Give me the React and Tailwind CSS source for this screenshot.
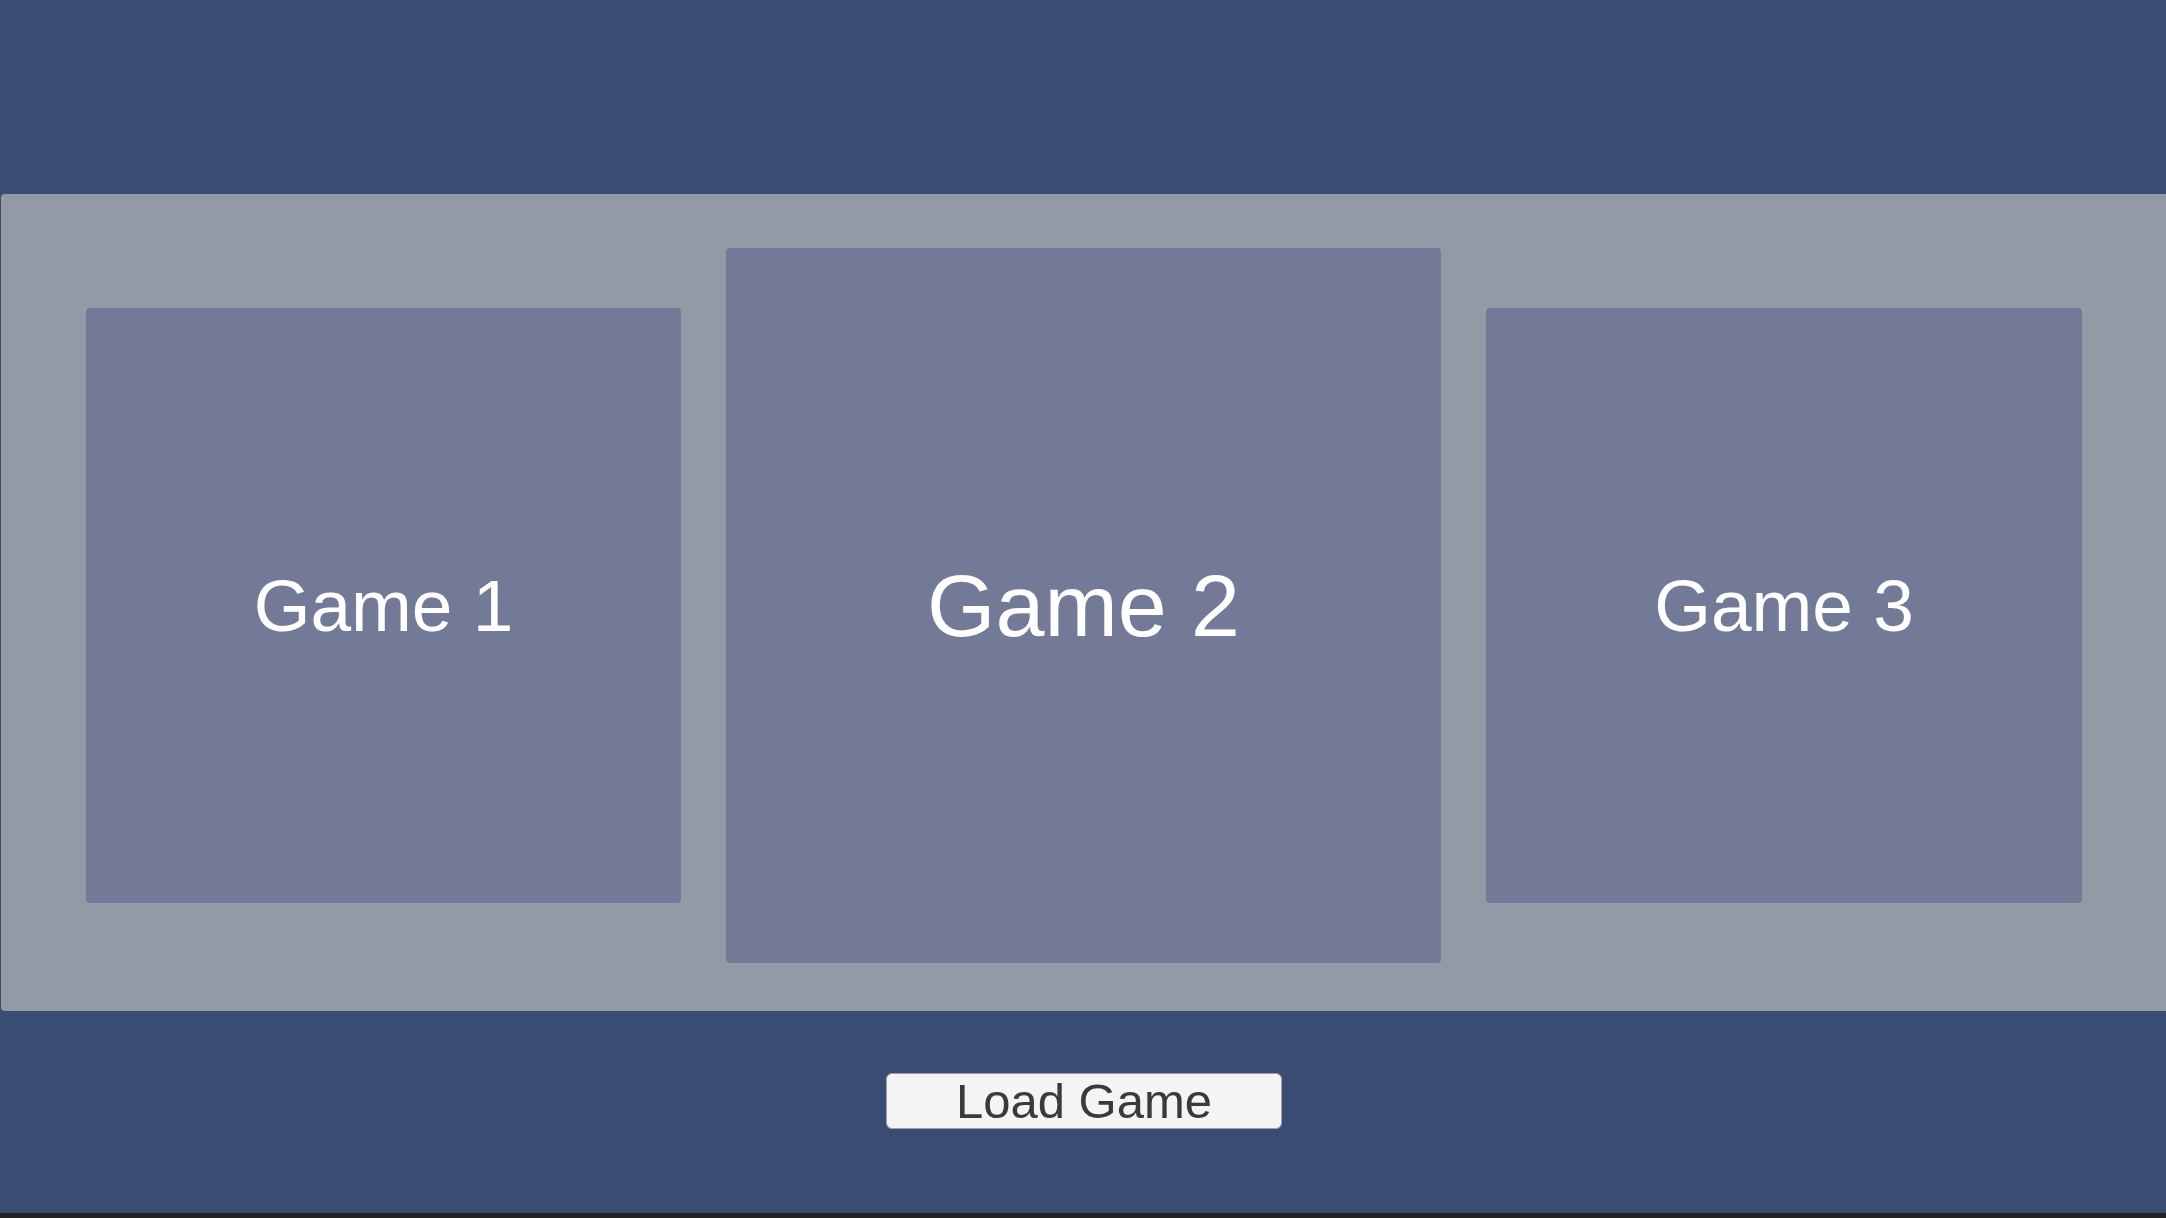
export default function App() {
  const font = { fontFamily: '"Liberation Sans", Arial, sans-serif' };

  return (
    <div className="w-[2166px] h-[1218px] bg-[#394c74] flex flex-col overflow-hidden" style={font}>
      <div className="h-[194px] shrink-0" />

      {/* game slots */}
      <div className="ml-[1px] h-[817px] shrink-0 bg-[#939aa5] rounded-l-[4px] flex items-center pt-[6px] pl-[85px] gap-[45px]">
        <div className="w-[595px] h-[595px] rounded-[4px] bg-[#737a97] flex items-center justify-center">
          <span className="text-white text-[73px] leading-none">Game 1</span>
        </div>
        <div className="w-[715px] h-[715px] rounded-[4px] bg-[#737a97] flex items-center justify-center">
          <span className="text-white text-[88px] leading-none">Game 2</span>
        </div>
        <div className="w-[596px] h-[595px] rounded-[4px] bg-[#737a97] flex items-center justify-center">
          <span className="text-white text-[73px] leading-none">Game 3</span>
        </div>
      </div>

      <div className="flex justify-center pt-[62px]">
        <button className="w-[396px] h-[56px] ml-[2px] rounded-[6px] bg-[#f4f4f4] border border-[#a0a0a0] text-[#3a3a3a] text-[49px] leading-none flex items-center justify-center">
          Load Game
        </button>
      </div>

      <div className="flex-1" />
      <div className="h-[5px] shrink-0 bg-[#232323]" />
    </div>
  );
}
